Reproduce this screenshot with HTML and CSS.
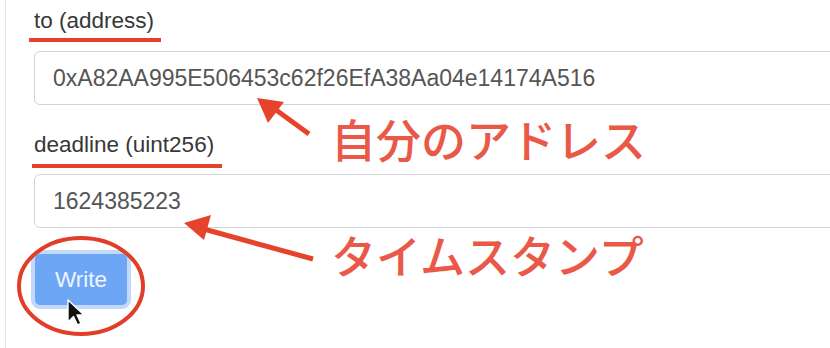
FILE: index.html
```html
<!DOCTYPE html>
<html lang="ja">
<head>
<meta charset="utf-8">
<title>Write</title>
<link rel="stylesheet" href="styles.css">
</head>
<body>
<div class="page">
  <div class="panel">
    <div class="field">
      <div class="label">to (address)</div>
      <div class="input">0xA82AA995E506453c62f26EfA38Aa04e14174A516</div>
    </div>
    <div class="field field-second">
      <div class="label">deadline (uint256)</div>
      <div class="input">1624385223</div>
    </div>
    <button class="btn">Write</button>
  </div>

  <div class="notes">
    <svg class="marks" width="830" height="348" viewBox="0 0 830 348">
      <rect x="29" y="38" width="132" height="4" fill="#e6412b"/>
      <rect x="32" y="164" width="190" height="4" fill="#e6412b"/>
      <line x1="309" y1="134" x2="272" y2="107" stroke="#e6432b" stroke-width="5"/>
      <polygon points="257,98 284,102 268,123" fill="#e6432b"/>
      <line x1="313" y1="259" x2="200" y2="228" stroke="#e6432b" stroke-width="5"/>
      <polygon points="184,223 211,215 204,240" fill="#e6432b"/>
      <ellipse cx="81" cy="286" rx="62" ry="48" fill="none" stroke="#e23d29" stroke-width="4"/>
      <path d="M68,300 L68,322 L73.5,316.5 L77.5,325 L81,323.5 L77,315 L84,315 Z" fill="#111" stroke="#fff" stroke-width="1.4" stroke-linejoin="round"/>
    </svg>
    <div class="note note-address">自分のアドレス</div>
    <div class="note note-time">タイムスタンプ</div>
  </div>
</div>
</body>
</html>
```

FILE: styles.css
```css
html, body {
  margin: 0;
  padding: 0;
  background: #ffffff;
  overflow: hidden;
}

.page {
  position: relative;
  width: 830px;
  height: 348px;
  overflow: hidden;
}

.panel {
  margin-left: 5px;
  height: 348px;
  box-sizing: border-box;
  border-left: 1px solid #e3e3e5;
  padding: 8px 0 0 28px;
  font-family: "Liberation Sans", Arial, sans-serif;
}

.field-second {
  margin-top: 27px;
}

.label {
  font-size: 22.5px;
  line-height: 26px;
  color: #383838;
  margin-bottom: 17px;
}

.field-second .label {
  margin-bottom: 16px;
}

.input {
  width: 840px;
  height: 54px;
  box-sizing: border-box;
  border: 1px solid #d2d3d7;
  border-radius: 6px;
  padding: 0 18px;
  font-size: 23px;
  line-height: 52px;
  color: #555555;
  white-space: nowrap;
  background: #ffffff;
}

.btn {
  display: block;
  margin: 26px 0 0 1px;
  width: 92px;
  height: 51px;
  border: none;
  border-radius: 5px;
  background: #6ca6f5;
  color: #eef5ff;
  font-family: "Liberation Sans", Arial, sans-serif;
  font-size: 22.5px;
  padding: 0;
  box-shadow: 0 0 0 4px #c3d9fa;
}

.notes {
  position: absolute;
  left: 0;
  top: 0;
  width: 830px;
  height: 348px;
  pointer-events: none;
}

.marks {
  position: absolute;
  left: 0;
  top: 0;
}

.note {
  position: absolute;
  left: 331px;
  font-family: "Noto Sans CJK JP", "Noto Sans", sans-serif;
  font-weight: 500;
  font-size: 45px;
  line-height: 45px;
  color: #ea5848;
  white-space: nowrap;
}

.note-address {
  top: 116px;
}

.note-time {
  top: 232px;
}
```
